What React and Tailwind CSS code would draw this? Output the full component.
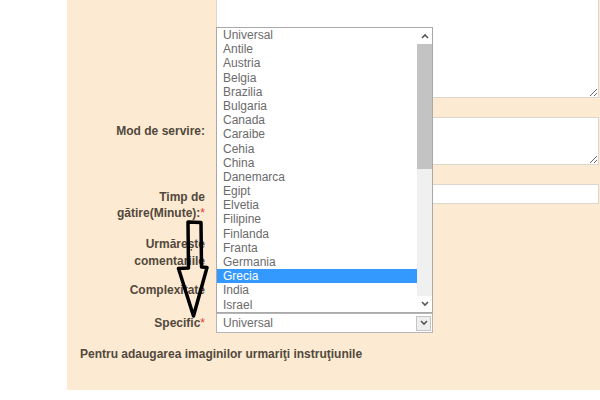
import React from 'react';

const countries = [
  'Universal', 'Antile', 'Austria', 'Belgia', 'Brazilia', 'Bulgaria', 'Canada',
  'Caraibe', 'Cehia', 'China', 'Danemarca', 'Egipt', 'Elvetia', 'Filipine',
  'Finlanda', 'Franta', 'Germania', 'Grecia', 'India', 'Israel',
];

const Star = () => <span className="text-[#e0392f] font-normal">*</span>;

const Chevron = ({ up }) => (
  <svg width="8" height="6" viewBox="0 0 8 6">
    <path d={up ? 'M1 5 L4 2 L7 5' : 'M1 1 L4 4 L7 1'} fill="none" stroke="#555" strokeWidth="1.6" />
  </svg>
);

const App = () => {
  return (
    <div className="relative w-[600px] h-[400px] bg-white overflow-hidden font-['Liberation_Sans',Arial,sans-serif]">
      <div className="ml-[67px] bg-[#fcebd2] pb-[28px] text-[12px] leading-[16px] font-bold text-[#52483d]">

        {/* top textarea (cut off) */}
        <div className="flex">
          <div className="w-[149px]" />
          <div className="flex-1 pr-[1px]">
            <textarea className="block w-full h-[98px] bg-white border border-t-0 border-[#dcd6cc] outline-none" />
          </div>
        </div>

        <div className="flex mt-[19px]">
          <div className="w-[149px] pr-[11px] pt-[6px] text-right">Mod de servire:</div>
          <div className="flex-1 pr-[1px]">
            <textarea className="block w-full h-[48px] bg-white border border-[#dcd6cc] outline-none" />
          </div>
        </div>

        <div className="flex mt-[19px]">
          <div className="w-[149px] pr-[11px] pt-[5px] text-right">
            Timp de<br />gătire(Minute):<Star />
          </div>
          <div className="flex-1 pr-[1px]">
            <input className="block w-full h-[20px] bg-white border border-[#dcd6cc] outline-none" />
          </div>
        </div>

        <div className="flex mt-[15px]">
          <div className="w-[149px] pr-[11px] text-right leading-[17px]">
            Urmărește<br />comentariile
          </div>
        </div>

        <div className="flex mt-[12px]">
          <div className="w-[149px] pr-[11px] text-right">Complexitate</div>
        </div>

        <div className="flex mt-[15px]">
          <div className="w-[149px] pr-[11px] pt-[2px] text-right">Specific<Star /></div>
          <div className="relative">
            {/* open dropdown list */}
            <div className="absolute bottom-full left-0 w-[217px] h-[286px] bg-white border border-[#a9a9a9] flex font-normal text-[#6b6b6b]">
              <ul className="flex-1">
                {countries.map((c) => (
                  <li
                    key={c}
                    className={`h-[14.2px] leading-[14.2px] pl-[6px] ${c === 'Grecia' ? 'bg-[#3399ff] text-white' : ''}`}
                  >
                    {c}
                  </li>
                ))}
              </ul>
              <div className="w-[15px] flex flex-col bg-[#f0f0f0]">
                <div className="h-[16px] flex items-center justify-center bg-white"><Chevron up /></div>
                <div className="h-[125px] bg-[#c3c3c3]" />
                <div className="flex-1" />
                <div className="h-[16px] flex items-center justify-center bg-white"><Chevron /></div>
              </div>
            </div>
            {/* closed select */}
            <div className="w-[217px] h-[20px] bg-white border border-[#b5b5b5] flex items-center justify-between pl-[6px] pr-[1px] font-normal text-[#6b6b6b]">
              <span>Universal</span>
              <div className="w-[15px] h-[15px] bg-[#eeeeee] border border-[#c4c4c4] flex items-center justify-center">
                <Chevron />
              </div>
            </div>
          </div>
        </div>

        <div className="mt-[13px] pl-[13px]">Pentru adaugarea imaginilor urmariţi instruţiunile</div>
      </div>

      {/* hand-drawn annotation arrow */}
      <svg className="absolute left-[175px] top-[219px] pointer-events-none" width="36" height="102" viewBox="0 0 36 102">
        <path
          d="M13.5 49 L13 3 L26 3.5 L26.5 48 L32 48.5 L18.5 97 L3.5 49.5 Z"
          fill="none"
          stroke="#000"
          strokeWidth="3.5"
          strokeLinejoin="round"
        />
      </svg>
    </div>
  );
};

export default App;
